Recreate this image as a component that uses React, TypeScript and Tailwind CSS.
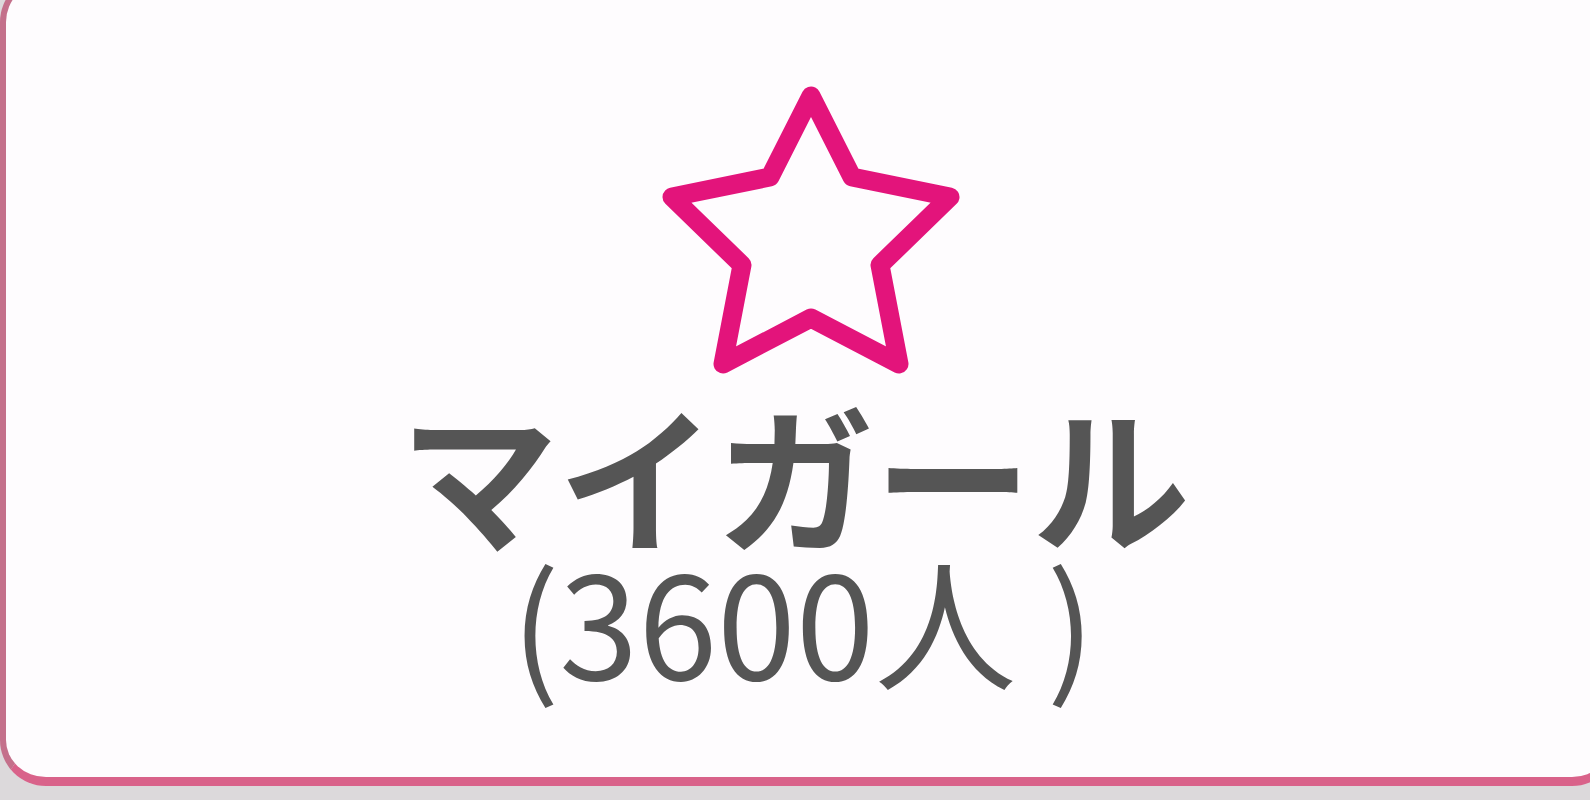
import React from 'react';

const jp = { fontFamily: '"Noto Sans CJK JP", "Noto Sans", sans-serif' };

// outline star, points taken from the reference's stroke centre line
function StarOutline() {
  return (
    <svg width="300" height="292" viewBox="0 0 300 292" fill="none" className="ml-[32px] shrink-0">
      <polygon
        points="150,10 191,91 289,111 219,179 238,278 150,232 62,278 81,179 11,111 109,91"
        stroke="#e3147b"
        strokeWidth="19"
        strokeLinejoin="round"
      />
    </svg>
  );
}

export default function App() {
  return (
    <div className="w-[1590px] h-[800px] overflow-hidden bg-[#dcd9db]">
      <div className="mt-[-24px] w-[1618px] h-[810px] rounded-[46px] border-[6px] border-b-[9px] border-[#d9628a] border-l-[#c4708b] bg-[#fefcfe] flex flex-col items-center pt-[104px] pr-[28px]">
        <StarOutline />
        <div className="mt-[18px] text-[158px] leading-[154px] font-bold text-[#555555]" style={jp}>
          マイガール
        </div>
        <div className="ml-[16px] text-[142px] leading-[136px] font-normal text-[#555555]" style={jp}>
          (3600人<span className="ml-[30px]">)</span>
        </div>
      </div>
    </div>
  );
}
